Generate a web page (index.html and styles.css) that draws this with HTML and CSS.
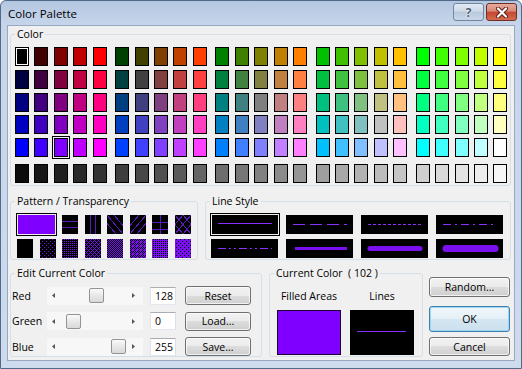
FILE: index.html
```html
<!DOCTYPE html>
<html lang="en">
  <head>
    <meta charset="UTF-8" />
    <title>Color Palette</title>
    <link rel="stylesheet" href="styles.css">
  </head>
  <body>
    <svg class="defs" width="0" height="0">
      <defs>
        <pattern id="dots1" width="4" height="4" patternUnits="userSpaceOnUse">
          <path d="M0 0h1v1h-1z M2 2h1v1h-1z" fill="#7a10f0" />
        </pattern>
        <pattern id="dots2" width="4" height="4" patternUnits="userSpaceOnUse">
          <path d="M0 0h1v1h-1z M2 0h1v1h-1z M0 2h1v1h-1z M2 2h1v1h-1z" fill="#7a10f0" />
        </pattern>
        <pattern id="dots3" width="4" height="4" patternUnits="userSpaceOnUse">
          <path d="M0 0h1v1h-1z M2 0h1v1h-1z M0 2h1v1h-1z M2 2h1v1h-1z M1 1h1v1h-1z M3 3h1v1h-1z" fill="#7a10f0" />
        </pattern>
        <pattern id="dots4" width="2" height="2" patternUnits="userSpaceOnUse">
          <path d="M0 0h1v1h-1z M1 1h1v1h-1z" fill="#7a10f0" />
        </pattern>
        <pattern id="dots5" width="4" height="4" patternUnits="userSpaceOnUse">
          <rect width="4" height="4" fill="#7a10f0" />
          <path d="M1 0h1v1h-1z M3 0h1v1h-1z M0 1h1v1h-1z M2 1h1v1h-1z M1 2h1v1h-1z M0 3h1v1h-1z" fill="#000" />
        </pattern>
        <pattern id="dots6" width="4" height="4" patternUnits="userSpaceOnUse">
          <rect width="4" height="4" fill="#7a10f0" />
          <path d="M1 0h1v1h-1z M3 0h1v1h-1z M1 2h1v1h-1z M3 2h1v1h-1z" fill="#000" />
        </pattern>
        <pattern id="dots7" width="4" height="4" patternUnits="userSpaceOnUse">
          <rect width="4" height="4" fill="#7a10f0" />
          <path d="M1 0h1v1h-1z M3 2h1v1h-1z" fill="#000" />
        </pattern>
      </defs>
    </svg>

    <div class="window">
      <div class="titlebar">
        <span class="title">Color Palette</span>
        <div class="caption">
          <span class="cap help">?</span>
          <span class="cap close">
            <svg width="14" height="11" viewBox="0 0 14 11">
              <path d="M3 1.5 L11 9.5 M11 1.5 L3 9.5" stroke="#5a1c12" stroke-width="4" stroke-linecap="round" />
              <path d="M3 1.5 L11 9.5 M11 1.5 L3 9.5" stroke="#fff" stroke-width="2.2" stroke-linecap="round" />
            </svg>
          </span>
        </div>
      </div>

      <div class="client">
        <fieldset class="group color-group">
          <legend>Color</legend>
          <div class="palette" id="palette"></div>
        </fieldset>

        <div class="mid">
          <fieldset class="group pattern-group">
            <legend>Pattern / Transparency</legend>
            <div class="pat-body">
              <div class="pat-row">
                <div class="pt big"></div>
                <svg class="pt" viewBox="0 0 16 19"><path d="M0 6.5 H16 M0 12.5 H16" /></svg>
                <svg class="pt" viewBox="0 0 16 19"><path d="M5.5 0 V19 M10.5 0 V19" /></svg>
                <svg class="pt" viewBox="0 0 16 19"><path d="M-7 0 L9 19 M0 0 L16 19 M7 0 L23 19" /></svg>
                <svg class="pt" viewBox="0 0 16 19"><path d="M9 0 L-7 19 M16 0 L0 19 M23 0 L7 19" /></svg>
                <svg class="pt" viewBox="0 0 16 19"><path d="M8.5 0 V19 M0 7.5 H16 M0 14.5 H16" /></svg>
                <svg class="pt" viewBox="0 0 16 19"><path d="M0 0 L16 19 M16 0 L0 19 M8 0 L16 9.5 L8 19 L0 9.5 Z" /></svg>
              </div>
              <div class="pat-row">
                <div class="pt"></div>
                <svg class="pt"><rect width="16" height="19" fill="url(#dots1)" /></svg>
                <svg class="pt"><rect width="16" height="19" fill="url(#dots2)" /></svg>
                <svg class="pt"><rect width="16" height="19" fill="url(#dots3)" /></svg>
                <svg class="pt"><rect width="16" height="19" fill="url(#dots4)" /></svg>
                <svg class="pt"><rect width="16" height="19" fill="url(#dots5)" /></svg>
                <svg class="pt"><rect width="16" height="19" fill="url(#dots6)" /></svg>
                <svg class="pt"><rect width="16" height="19" fill="url(#dots7)" /></svg>
              </div>
            </div>
          </fieldset>

          <fieldset class="group line-group">
            <legend>Line Style</legend>
            <div class="line-body">
              <svg class="ls sel"><line x1="6" y1="8.5" x2="60" y2="8.5" /></svg>
              <svg class="ls"><line x1="7" y1="9.5" x2="61" y2="9.5" stroke-dasharray="12 5" /></svg>
              <svg class="ls"><line x1="7" y1="9.5" x2="61" y2="9.5" stroke-dasharray="3 2" /></svg>
              <svg class="ls"><line x1="7" y1="9.5" x2="61" y2="9.5" stroke-dasharray="8 4 2 4" /></svg>
              <svg class="ls"><line x1="7" y1="9.5" x2="61" y2="9.5" stroke-dasharray="8 3 2 3 2 3" /></svg>
              <svg class="ls"><line class="w3" x1="9" y1="9.5" x2="61" y2="9.5" /></svg>
              <svg class="ls"><line class="w5" x1="9" y1="9.5" x2="59" y2="9.5" /></svg>
              <svg class="ls"><line class="w7" x1="10" y1="9.5" x2="59" y2="9.5" /></svg>
            </div>
          </fieldset>
        </div>

        <div class="bottom">
          <fieldset class="group edit-group">
            <legend>Edit Current Color</legend>
            <div class="edit-body" id="editBody"></div>
          </fieldset>

          <fieldset class="group cur-group">
            <legend>Current Color&nbsp; ( 102 )</legend>
            <div class="cur-body">
              <div class="cur-col">
                <span class="cur-label">Filled Areas</span>
                <div class="fill-box"></div>
              </div>
              <div class="cur-col">
                <span class="cur-label">Lines</span>
                <svg class="line-box"><line x1="7" y1="21.5" x2="56" y2="21.5" /></svg>
              </div>
            </div>
          </fieldset>

          <div class="side">
            <button class="btn random">Random...</button>
            <button class="btn ok">OK</button>
            <button class="btn cancel">Cancel</button>
          </div>
        </div>
      </div>
    </div>

    <script>
      const levels = [0, 64, 128, 192, 255];
      const palette = document.getElementById("palette");

      function swatch(color) {
        const el = document.createElement("div");
        el.className = "sw";
        el.style.background = color;
        return el;
      }

      for (let r = 0; r < 5; r++) {
        const row = document.createElement("div");
        row.className = "prow";
        for (let g = 0; g < 5; g++) {
          const group = document.createElement("div");
          group.className = "pgroup";
          for (let c = 0; c < 5; c++) {
            const sw = swatch(`rgb(${levels[c]}, ${levels[g]}, ${levels[r]})`);
            if (r === 0 && g === 0 && c === 0) sw.classList.add("focus");
            if (r === 4 && g === 0 && c === 2) sw.classList.add("sel");
            group.appendChild(sw);
          }
          row.appendChild(group);
        }
        palette.appendChild(row);
      }

      const grays = document.createElement("div");
      grays.className = "prow gray";
      for (let g = 0; g < 5; g++) {
        const group = document.createElement("div");
        group.className = "pgroup";
        for (let c = 0; c < 5; c++) {
          const v = Math.round(12 + (g * 5 + c) * (246 - 12) / 24);
          group.appendChild(swatch(`rgb(${v}, ${v}, ${v})`));
        }
        grays.appendChild(group);
      }
      palette.appendChild(grays);

      // rgb rows: label, scrollbar, value box, button
      const rows = [
        { name: "Red", value: 128, button: "Reset" },
        { name: "Green", value: 0, button: "Load..." },
        { name: "Blue", value: 255, button: "Save..." },
      ];
      const editBody = document.getElementById("editBody");
      rows.forEach((row) => {
        const offset = 6 + (row.value / 255) * 45;
        editBody.innerHTML += `
          <div class="erow">
            <label class="elabel">${row.name}</label>
            <div class="slider">
              <span class="arr"><svg width="3" height="5"><polygon points="3,0 3,5 0,2.5" /></svg></span>
              <span class="lane"><span class="thumb" style="margin-left: ${offset}px"></span></span>
              <span class="arr"><svg width="3" height="5"><polygon points="0,0 0,5 3,2.5" /></svg></span>
            </div>
            <span class="val">${row.value}</span>
            <button class="btn">${row.button}</button>
          </div>`;
      });
    </script>
  </body>
</html>
```

FILE: styles.css
```css
* {
  box-sizing: border-box;
}
body {
  margin: 0;
  font-family: "Open Sans", "Liberation Sans", sans-serif;
  font-size: 10.5px;
  color: #000;
  background: #fff;
}
.defs {
  display: block;
  height: 0;
}
.window {
  width: 522px;
  height: 369px;
  border: 1px solid #52698a;
  border-radius: 6px 6px 0 0;
  background: linear-gradient(#b4c7e1, #c6d5ea 24px, #cddbed);
  display: flex;
  flex-direction: column;
}
.titlebar {
  height: 24px;
  display: flex;
  justify-content: space-between;
  padding: 0 4px 0 7px;
}
.title {
  font-size: 11.5px;
  line-height: 24px;
  padding-top: 1px;
}
.caption {
  display: flex;
  gap: 2px;
  padding-top: 2px;
}
.cap {
  width: 31px;
  height: 18px;
  border-radius: 3px;
  display: flex;
  align-items: center;
  justify-content: center;
}
.help {
  border: 1px solid #71869f;
  background: linear-gradient(#e3eaf3, #cdd9e7 45%, #b8c8dc 50%, #c9d7e8);
  color: #4c5d75;
  font-weight: bold;
  font-size: 12px;
  text-shadow: 0 0 2px #fff, 0 0 1px #fff;
}
.close {
  border: 1px solid #6e3024;
  background: linear-gradient(#e6aa9c, #d88a78 45%, #c5462f 50%, #d46b50);
}

.client {
  margin: 0 6px;
  height: 336px;
  background: #f0f0f0;
  border: 1px solid #97a9c0;
}

.group {
  margin: 0;
  padding: 0;
  min-width: 0;
  flex-shrink: 0;
  border: 1px solid #d5dfe5;
  border-radius: 3px;
}
legend {
  padding: 0 2px;
  margin-left: 4px;
  line-height: 14px;
}

/* color grid */
.color-group {
  margin: 1px 3px 0 2px;
}
.palette {
  padding: 6px 3px 2px 4px;
  display: flex;
  flex-direction: column;
  gap: 3.75px;
}
.prow {
  display: flex;
  gap: 8.65px;
}
.prow.gray {
  margin-top: 3.25px;
}
.pgroup {
  display: flex;
  gap: 5.4px;
}
.sw {
  width: 14px;
  height: 19px;
  border: 1px solid #000;
}
.sw.focus {
  box-shadow: inset 0 0 0 1px #fff;
}
.sw.sel {
  outline: 1px solid #000;
  outline-offset: 1px;
}

/* pattern + line style */
.mid {
  display: flex;
  gap: 7px;
  margin: 8px 3px 0 2px;
}
.pattern-group {
  width: 188px;
}
.line-group {
  flex: 1;
}
.pat-body {
  padding: 7px 5px 1px 6px;
  display: flex;
  flex-direction: column;
  gap: 5px;
}
.pat-row {
  display: flex;
  gap: 6.57px;
}
.pt {
  display: block;
  width: 16px;
  height: 19px;
  background: #000;
  flex-shrink: 0;
  shape-rendering: crispEdges;
}
.pt path {
  fill: none;
  stroke: #5a18b8;
  stroke-width: 1;
}
.pt.big {
  width: 36.57px;
  margin: 0 1px;
  background: #8000ff;
  outline: 1px solid #000;
  outline-offset: 1px;
}
.line-body {
  padding: 7px 7px 1px 5px;
  display: grid;
  grid-template-columns: repeat(4, 67px);
  gap: 5px 8px;
}
.ls {
  display: block;
  width: 67px;
  height: 19px;
  background: #000;
}
.ls.sel {
  width: 66px;
  margin-left: 1px;
  outline: 1px solid #000;
  outline-offset: 1px;
}
.ls line,
.line-box line {
  stroke: #8a30ff;
  stroke-width: 1;
}
.ls line.w3,
.ls line.w5,
.ls line.w7 {
  stroke: #7a10f0;
}
.ls line.w3 {
  stroke-width: 3;
}
.ls line.w5 {
  stroke-width: 5;
  stroke-linecap: round;
}
.ls line.w7 {
  stroke-width: 7;
  stroke-linecap: round;
}

/* bottom area */
.bottom {
  display: flex;
  align-items: flex-start;
  margin: 6px 0 0 2px;
}
.edit-group {
  width: 252px;
}
.edit-body {
  padding: 6px 0 0 1px;
  display: flex;
  flex-direction: column;
  gap: 6.5px;
}
.erow {
  display: flex;
  align-items: center;
  height: 19px;
}
.elabel {
  width: 35px;
}
.slider {
  width: 96px;
  height: 18px;
  display: flex;
  align-items: center;
  padding-right: 2px;
  margin-right: 7px;
  background: #f7f7f7;
}
.arr {
  width: 13px;
  display: flex;
  justify-content: center;
}
.arr:last-child {
  width: 15px;
}
.arr polygon {
  fill: #555;
}
.lane {
  width: 66px;
  display: flex;
}
.thumb {
  width: 15px;
  height: 15px;
  border: 1px solid #939393;
  border-radius: 2px;
  background: linear-gradient(#fafafa, #e8e8e8 50%, #d9d9d9);
}
.val {
  width: 26px;
  height: 18px;
  margin-right: 9px;
  padding-left: 4px;
  line-height: 16px;
  background: #fff;
  border: 1px solid;
  border-color: #abadb3 #dbdfe6 #e3e9ef #e2e3ea;
}
.btn {
  width: 66px;
  height: 19px;
  padding: 0;
  font: inherit;
  color: #000;
  border: 1px solid #707070;
  border-radius: 3px;
  background: linear-gradient(#f2f2f2, #ebebeb 50%, #dddddd 50%, #cfcfcf);
  box-shadow: inset 0 0 0 1px rgba(255, 255, 255, 0.7);
}

.cur-group {
  width: 154px;
  margin-left: 7px;
}
.cur-body {
  padding: 9px 7px 1px 7px;
  display: flex;
  gap: 9px;
}
.cur-col {
  width: 64px;
  display: flex;
  flex-direction: column;
  align-items: center;
}
.cur-label {
  line-height: 14px;
  margin-bottom: 7px;
}
.fill-box {
  width: 64px;
  height: 45px;
  background: #8000ff;
  border: 1px solid #1a0033;
}
.line-box {
  display: block;
  width: 64px;
  height: 45px;
  background: #000;
}

.side {
  width: 81px;
  margin: 11px 0 0 6px;
  display: flex;
  flex-direction: column;
}
.side .btn {
  width: 81px;
}
.random {
  height: 20px;
}
.btn.ok {
  height: 26px;
  margin-top: 9px;
  border-color: #3c7fb1;
  background: linear-gradient(#f0f7fb, #e4eff6 50%, #d4e6f1 50%, #cbe1ee);
  box-shadow: inset 0 0 0 1px #9fd6f2;
}
.cancel {
  margin-top: 5px;
}
```
